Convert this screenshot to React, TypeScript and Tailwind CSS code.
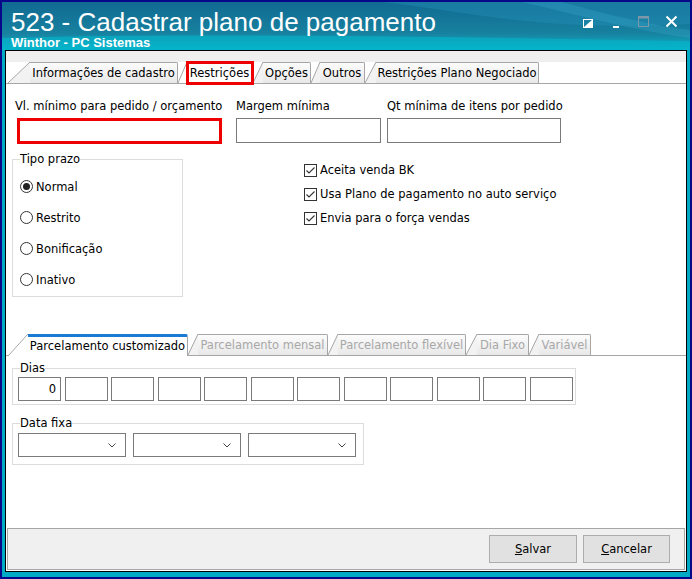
import clsx from "clsx"

const ui = "font-['DejaVu_Sans',sans-serif] text-[11.5px] leading-[14px]"

function Slant({ w, h, fill }: { w: number; h: number; fill: string }) {
  return (
    <svg width={w} height={h} className="block shrink-0">
      <polygon points={`0,${h} ${w},0 ${w},${h}`} fill={fill} />
      <line x1={0} y1={h} x2={w} y2={0} stroke="#a6a6a6" />
    </svg>
  )
}

type TabProps = {
  label: string
  slant: number
  width: string
  active?: boolean
  marked?: boolean
  dim?: boolean
  blue?: boolean
}

function Tab({ label, slant, width, active, marked, dim, blue }: TabProps) {
  const h = blue ? 22 : 21
  return (
    <div className={clsx("flex items-end shrink-0", blue && "-mb-px relative z-10")}>
      <Slant w={slant} h={h} fill={active ? "#ffffff" : "#f2f2f2"} />
      <div
        className={clsx(
          "relative flex items-center justify-center border-r border-[#a6a6a6] rounded-tr-[2px]",
          width,
          blue ? "h-[22px] border-t-[3px] border-t-[#1b7bd4]" : "h-[21px] border-t",
          active ? "bg-white" : "bg-linear-to-b from-[#fcfcfc] to-[#e8e8e8]",
          dim ? "text-[#a8a8a8]" : "text-black"
        )}
      >
        <span className={clsx("whitespace-nowrap", blue && "-mt-[2px]")}>{label}</span>
        {marked && (
          <span className="absolute -left-[1px] -right-[2px] -top-[2px] -bottom-[2px] border-[3px] border-[#ee0000]" />
        )}
      </div>
    </div>
  )
}

function Radio({ label, checked }: { label: string; checked?: boolean }) {
  return (
    <div className="h-[31px] flex items-center gap-[3px]">
      <span className="w-[13px] h-[13px] rounded-full border border-[#333] flex items-center justify-center bg-white">
        {checked && <span className="w-[7px] h-[7px] rounded-full bg-[#222]" />}
      </span>
      <span>{label}</span>
    </div>
  )
}

function Check({ label }: { label: string }) {
  return (
    <div className="h-[24px] flex items-center gap-[3px] whitespace-nowrap">
      <span className="w-[13px] h-[13px] border border-[#333] bg-white flex items-center justify-center">
        <svg width="11" height="11" viewBox="0 0 11 11">
          <polyline points="1.5,5.5 4,8 9.5,2.5" fill="none" stroke="#333" strokeWidth="1.1" />
        </svg>
      </span>
      <span>{label}</span>
    </div>
  )
}

function Combo() {
  return (
    <div className="w-[108px] h-[24px] border border-[#7a7a7a] bg-white flex items-center justify-end pr-[9px]">
      <svg width="8" height="5" viewBox="0 0 8 5">
        <polyline points="0.5,0.5 4,4 7.5,0.5" fill="none" stroke="#444" strokeWidth="1" />
      </svg>
    </div>
  )
}

const dias = ["0", "", "", "", "", "", "", "", "", "", "", ""]

export default function App() {
  return (
    <div className={clsx("w-[692px] h-[579px] border-2 border-[#07078a] bg-[#00a9c4] flex flex-col pl-[3px] pr-[3px] pb-[5px] overflow-hidden", ui)}>
      {/* title bar */}
      <div className="relative h-[48px] -mx-[3px] px-[9px] bg-linear-to-b from-[#116a92] via-[#17819f] via-65% to-[#03b4cb] overflow-hidden">
        <svg className="absolute inset-0" width="688" height="48">
          <path d="M380 0 C470 10 540 30 688 22 L688 0 Z" fill="#2690b8" opacity="0.4" />
          <path d="M520 0 C580 14 640 30 688 36 L688 28 C630 20 590 8 560 0 Z" fill="#3aa9cc" opacity="0.3" />
          <path d="M0 36 C160 31 420 34 688 39 L688 48 L0 48 Z" fill="#03b5cc" opacity="0.6" />
        </svg>
        <div className="relative font-['Liberation_Sans',Arial,sans-serif] text-white">
          <div className="text-[26px] leading-[28px] pt-[6px] whitespace-nowrap">523 - Cadastrar plano de pagamento</div>
          <div className="text-[13px] leading-[13px] font-bold whitespace-nowrap">Winthor - PC Sistemas</div>
        </div>
        <div className="absolute right-[12px] top-[12px] flex items-center">
          <svg width="12" height="12" viewBox="0 0 12 12" className="mr-[16px] mt-[3px]">
            <rect x="1.5" y="2.5" width="9" height="8" fill="none" stroke="#fff" />
            <polygon points="10,3 10,10 2,10" fill="#fff" />
          </svg>
          <svg width="12" height="12" viewBox="0 0 12 12" className="mr-[15px] mt-[3px]">
            <rect x="3" y="9" width="6" height="2" fill="#fff" />
          </svg>
          <svg width="13" height="13" viewBox="0 0 13 13" className="mr-[15px]">
            <rect x="1.5" y="1.5" width="10" height="10" fill="none" stroke="#7c97a8" />
            <rect x="1.5" y="1.5" width="10" height="2" fill="#7c97a8" />
          </svg>
          <svg width="13" height="13" viewBox="0 0 13 13">
            <path d="M1.5 1.5 L11.5 11.5 M11.5 1.5 L1.5 11.5" stroke="#fff" strokeWidth="2" />
          </svg>
        </div>
      </div>

      {/* main panel */}
      <div className="flex-1 border border-black bg-white flex flex-col text-black">
        <div className="h-[11px] bg-[#efefef]" />
        <div className="h-[22px] border-b border-[#a6a6a6] flex items-end pl-[2px]">
          <Tab label="Informações de cadastro" slant={22} width="w-[148px]" />
          <Tab label="Restrições" slant={9} width="w-[66px]" active marked />
          <Tab label="Opções" slant={10} width="w-[48px]" />
          <Tab label="Outros" slant={9} width="w-[45px]" />
          <Tab label="Restrições Plano Negociado" slant={11} width="w-[163px]" />
        </div>

        <div className="flex-1 flex flex-col">
          {/* row 1 */}
          <div className="flex mt-[15px] ml-[9px]">
            <div className="w-[207px]">
              <div className="whitespace-nowrap">Vl. mínimo para pedido / orçamento</div>
              <div className="ml-[2px] mt-[5px] w-[205px] h-[26px] border-[3px] border-[#ee0000]" />
            </div>
            <div className="ml-[14px] w-[145px]">
              <div className="whitespace-nowrap">Margem mínima</div>
              <div className="mt-[5px] h-[25px] border border-[#7a7a7a]" />
            </div>
            <div className="ml-[6px] w-[174px]">
              <div className="whitespace-nowrap">Qt mínima de itens por pedido</div>
              <div className="mt-[5px] h-[25px] border border-[#7a7a7a]" />
            </div>
          </div>

          {/* row 2 */}
          <div className="flex mt-[8px] ml-[6px]">
            <fieldset className="w-[171px] border border-[#dcdcdc] pl-[7px] pb-[1px]">
              <legend>Tipo prazo</legend>
              <div className="mt-[5px]">
                <Radio label="Normal" checked />
                <Radio label="Restrito" />
                <Radio label="Bonificação" />
                <Radio label="Inativo" />
              </div>
            </fieldset>
            <div className="ml-[121px] mt-[6px]">
              <Check label="Aceita venda BK" />
              <Check label="Usa Plano de pagamento no auto serviço" />
              <Check label="Envia para o força vendas" />
            </div>
          </div>

          {/* second tab row */}
          <div className="mt-[36px] h-[23px] border-b border-[#a6a6a6] flex items-end pl-[2px]">
            <Tab label="Parcelamento customizado" slant={20} width="w-[160px]" active blue />
            <Tab label="Parcelamento mensal" slant={10} width="w-[130px]" dim />
            <Tab label="Parcelamento flexível" slant={10} width="w-[128px]" dim />
            <Tab label="Dia Fixo" slant={11} width="w-[52px]" dim />
            <Tab label="Variável" slant={10} width="w-[52px]" dim />
          </div>

          <fieldset className="mt-[5px] ml-[6px] w-[564px] border border-[#dcdcdc] pl-[5px] pb-[3px]">
            <legend className="ml-[2px]">Dias</legend>
            <div className="mt-[2px] flex gap-[3.5px]">
              {dias.map((d, i) => (
                <div key={i} className="w-[43px] h-[24px] border border-[#7a7a7a] flex items-center justify-end pr-[4px]">
                  {d}
                </div>
              ))}
            </div>
          </fieldset>

          <fieldset className="mt-[11px] ml-[6px] w-[352px] border border-[#dcdcdc] pl-[5px] pb-[7px]">
            <legend className="ml-[2px]">Data fixa</legend>
            <div className="mt-[3px] flex gap-[7px]">
              <Combo />
              <Combo />
              <Combo />
            </div>
          </fieldset>
        </div>

        {/* bottom buttons */}
        <div className="mx-[1px] mb-[1px] h-[42px] border border-[#a6a6a6] bg-[#f0f0f0] flex items-center justify-end gap-[6px] pr-[14px]">
          <button className="w-[88px] h-[28px] border border-[#adadad] bg-[#e1e1e1] text-black">
            <span className="underline">S</span>alvar
          </button>
          <button className="w-[87px] h-[28px] border border-[#adadad] bg-[#e1e1e1] text-black">
            <span className="underline">C</span>ancelar
          </button>
        </div>
      </div>
    </div>
  )
}
